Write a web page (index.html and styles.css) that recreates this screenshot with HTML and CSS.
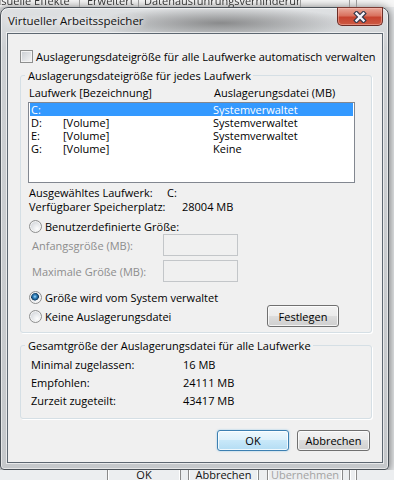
FILE: index.html
```html
<!DOCTYPE html>
<html lang="de">
    <head>
        <meta charset="UTF-8">
        <meta name="viewport" content="width=device-width, initial-scale=1.0">
        <title>Virtueller Arbeitsspeicher</title>
        <link rel="stylesheet" href="styles.css">
    </head>
    <body>
        <!-- Fenster "Leistungsoptionen" im Hintergrund, oben nur die Reiter -->
        <div class="hg-reiter">
            <span class="reiter reiter-1">Visuelle Effekte</span>
            <span class="reiter reiter-2">Erweitert</span>
            <span class="reiter reiter-3">Datenausführungsverhinderung</span>
            <span class="reiter reiter-4"></span>
            <span class="reiter reiter-5"></span>
        </div>

        <div class="fenster">
            <div class="titelleiste">
                <span class="titel">Virtueller Arbeitsspeicher</span>
                <button class="schliessen" title="Schließen">
                    <svg width="14" height="12" viewBox="0 0 14 12">
                        <path d="M3.5 2.5 L10.5 9.5 M10.5 2.5 L3.5 9.5" stroke="#34384a" stroke-width="4.6" stroke-linecap="square" fill="none"/>
                        <path d="M3.5 2.5 L10.5 9.5 M10.5 2.5 L3.5 9.5" stroke="#f4f3fb" stroke-width="2.4" stroke-linecap="square" fill="none"/>
                    </svg>
                </button>
            </div>

            <div class="inhalt">
                <div class="check-zeile">
                    <span class="checkbox"></span>
                    <span>Auslagerungsdateigröße für alle Laufwerke automatisch verwalten</span>
                </div>

                <!-- Einstellungen pro Laufwerk -->
                <fieldset class="gruppe gruppe-laufwerke">
                    <legend>Auslagerungsdateigröße für jedes Laufwerk</legend>
                    <div class="liste-kopf">
                        <span>Laufwerk [Bezeichnung]</span>
                        <span>Auslagerungsdatei (MB)</span>
                    </div>
                    <div class="liste">
                        <div class="zeile aktiv"><span>C:</span><span></span><span>Systemverwaltet</span></div>
                        <div class="zeile"><span>D:</span><span>[Volume]</span><span>Systemverwaltet</span></div>
                        <div class="zeile"><span>E:</span><span>[Volume]</span><span>Systemverwaltet</span></div>
                        <div class="zeile"><span>G:</span><span>[Volume]</span><span>Keine</span></div>
                    </div>

                    <div class="info info-laufwerk">
                        <span class="info-label">Ausgewähltes Laufwerk:</span>
                        <span>C:</span>
                    </div>
                    <div class="info info-platz">
                        <span class="info-label">Verfügbarer Speicherplatz:</span>
                        <span>28004 MB</span>
                    </div>

                    <div class="radio-zeile radio-eigene">
                        <span class="radio"></span>Benutzerdefinierte Größe:
                    </div>
                    <div class="feld-zeile feld-anfang">
                        <span class="feld-label">Anfangsgröße (MB):</span>
                        <span class="textfeld"></span>
                    </div>
                    <div class="feld-zeile feld-max">
                        <span class="feld-label">Maximale Größe (MB):</span>
                        <span class="textfeld"></span>
                    </div>
                    <div class="radio-zeile radio-system">
                        <span class="radio an"></span>Größe wird vom System verwaltet
                    </div>
                    <div class="radio-zeile radio-keine">
                        <span class="radio"></span>Keine Auslagerungsdatei
                        <button class="knopf festlegen">Festlegen</button>
                    </div>
                </fieldset>

                <!-- Summen über alle Laufwerke -->
                <fieldset class="gruppe gruppe-gesamt">
                    <legend>Gesamtgröße der Auslagerungsdatei für alle Laufwerke</legend>
                    <div class="wert-zeile"><span class="wert-label">Minimal zugelassen:</span><span>16 MB</span></div>
                    <div class="wert-zeile"><span class="wert-label">Empfohlen:</span><span>24111 MB</span></div>
                    <div class="wert-zeile"><span class="wert-label">Zurzeit zugeteilt:</span><span>43417 MB</span></div>
                </fieldset>

                <div class="knopf-leiste">
                    <button class="knopf standard">OK</button>
                    <button class="knopf abbrechen">Abbrechen</button>
                </div>
            </div>
        </div>

        <!-- Knöpfe des Hintergrundfensters, unten angeschnitten -->
        <div class="hg-knoepfe">
            <span class="hk hk-ok">OK</span>
            <span class="hk hk-abbrechen">Abbrechen</span>
            <span class="hk hk-uebernehmen">Übernehmen</span>
            <span class="hk hk-rand"></span>
        </div>
    </body>
</html>
```

FILE: styles.css
```css
/* Dialog "Virtueller Arbeitsspeicher" im Stil von Windows 7 */
body {
    margin: 0;
    width: 394px;
    height: 480px;
    overflow: hidden;
    background-color: #e8eaec;
    font-family: "Open Sans", "Noto Sans", sans-serif;
    font-size: 11px;
    color: #000;
}

/* Hintergrundfenster oben */
.hg-reiter {
    display: flex;
    height: 7px;
    overflow: hidden;
    background-color: #f7f7f7;
    color: #333;
}
.reiter {
    box-sizing: border-box;
    flex: none;
    margin-top: -6px;
    line-height: 14px;
    border-right: 1px solid #9a9a9a;
    white-space: nowrap;
    overflow: hidden;
    filter: blur(0.4px);
}
.reiter-1 { width: 80px; text-indent: -8px; }
.reiter-2 { width: 59px; padding-left: 7px; }
.reiter-3 { width: 162px; padding-left: 5px; }
.reiter-4 { width: 49px; }
.reiter-5 { width: 7px; }

/* Fensterrahmen (Aero) */
.fenster {
    box-sizing: border-box;
    width: 389px;
    height: 463px;
    padding: 0 5px 0 6px;
    border: 1px solid #4a5158;
    border-radius: 8px 8px 4px 4px;
    background:
        radial-gradient(ellipse 130px 16px at 220px 15px, rgba(85, 85, 85, 0.6), rgba(85, 85, 85, 0)),
        linear-gradient(#dfe1e3, #cdd0d3 40px, #c5c8cb);
    box-shadow: inset 0 0 0 1px rgba(255, 255, 255, 0.55), 0 1px 8px 1px rgba(0, 0, 0, 0.5);
}
.titelleiste {
    display: flex;
    align-items: flex-start;
    height: 25px;
}
.titel {
    flex: 1;
    padding-left: 1px;
    font-size: 11.5px;
    line-height: 25px;
    color: #111;
    text-shadow: 0 0 6px #fff, 0 0 10px #fff;
}
.schliessen {
    box-sizing: border-box;
    display: flex;
    align-items: center;
    justify-content: center;
    width: 46px;
    height: 19px;
    margin-top: -1px;
    padding: 0;
    border: 1px solid #6b2c25;
    border-top-color: #7a3a33;
    border-radius: 0 0 5px 5px;
    background: linear-gradient(#e9a899 0, #d9725f 45%, #c7432f 55%, #cc5a43 100%);
    box-shadow: inset 0 0 0 1px rgba(255, 200, 190, 0.45);
}

/* Client-Bereich */
.inhalt {
    box-sizing: border-box;
    height: 430px;
    border: 1px solid #5d6771;
    background-color: #f0f0f0;
    box-shadow: 0 0 0 1px rgba(255, 255, 255, 0.6);
}

.check-zeile {
    display: flex;
    align-items: center;
    height: 13px;
    line-height: 13px;
    margin: 16px 0 0 12px;
}
.checkbox {
    box-sizing: border-box;
    width: 13px;
    height: 13px;
    margin-right: 3px;
    border: 1px solid #8e8f8f;
    background: linear-gradient(135deg, #c9cdd2, #f6f6f6);
    box-shadow: inset 0 0 0 1px #f3f3f3;
}

/* Gruppenrahmen */
.gruppe {
    margin: 5px 10px 0 12px;
    padding: 0 7px 5px;
    min-width: 0;
    border: 1px solid #d5dfe5;
    border-radius: 3px;
    box-shadow: 1px 1px 0 #fff;
}
.gruppe legend {
    margin-left: -3px;
    padding: 0 2px 0 3px;
    line-height: 15px;
}
.gruppe-gesamt {
    padding-top: 3px;
    padding-bottom: 8px;
}

.liste-kopf {
    display: grid;
    grid-template-columns: 185px 1fr;
    margin-top: 2px;
    padding-left: 1px;
    line-height: 15px;
}
.liste {
    box-sizing: border-box;
    width: 327px;
    height: 81px;
    margin-top: 2px;
    padding: 0 1px;
    border: 1px solid #828790;
    background-color: #fff;
}
.zeile {
    display: grid;
    grid-template-columns: 32px 150px 1fr;
    height: 13px;
    padding-left: 1px;
    line-height: 13px;
}
.zeile.aktiv {
    background-color: #3399ff;
    color: #fff;
}

.info {
    display: flex;
    padding-left: 1px;
    line-height: 14px;
}
.info-laufwerk { margin-top: 3px; }
.info-laufwerk .info-label { width: 138px; }
.info-platz .info-label { width: 153px; }

.radio-zeile {
    display: flex;
    align-items: center;
    height: 13px;
    line-height: 13px;
}
.radio-eigene { margin-top: 6px; }
.radio-system { margin-top: 9px; }
.radio-keine {
    height: 22px;
    margin-top: 1px;
}
.radio {
    box-sizing: border-box;
    width: 13px;
    height: 13px;
    margin: 0 3px 0 1px;
    border: 1px solid #8e8f8f;
    border-radius: 50%;
    background: radial-gradient(circle at 65% 70%, #fdfdfd, #cfd3d8 85%);
    box-shadow: inset 0 0 0 1px #f4f4f4;
}
.radio.an {
    background:
        radial-gradient(circle at 45% 42%, #a8dcf8 0, #3a8cc8 1.5px, #1a5685 3px, #0f3556 3.6px, rgba(15, 53, 86, 0) 4.2px),
        radial-gradient(circle at 65% 70%, #fdfdfd, #cfd3d8 85%);
}

.feld-zeile {
    display: flex;
    align-items: center;
    height: 22px;
    padding-left: 4px;
    color: #8d8d8d;
}
.feld-anfang { margin-top: 1px; }
.feld-max { margin-top: 4px; }
.feld-label { width: 131px; }
.textfeld {
    box-sizing: border-box;
    width: 75px;
    height: 22px;
    border: 1px solid #c3c6c9;
    background-color: #f0f0f0;
}

/* Knöpfe */
.knopf {
    box-sizing: border-box;
    height: 21px;
    padding: 0;
    border: 1px solid #707070;
    border-radius: 3px;
    background: linear-gradient(#f2f2f2 0, #ebebeb 50%, #dddddd 50%, #cfcfcf 100%);
    box-shadow: inset 0 0 0 1px rgba(255, 255, 255, 0.75);
    font: inherit;
    color: #000;
}
.festlegen {
    width: 72px;
    height: 22px;
    margin: 0 25px 0 auto;
}
.knopf.standard {
    width: 72px;
    border-color: #3c7fb1;
    background: linear-gradient(#eef8fd 0, #dcf0fb 50%, #c8e8f9 50%, #b4ddf4 100%);
    box-shadow: inset 0 0 0 1px rgba(255, 255, 255, 0.8), 0 0 2px rgba(80, 170, 230, 0.6);
}
.knopf.abbrechen { width: 73px; }

.wert-zeile {
    display: flex;
    padding-left: 3px;
    line-height: 18px;
}
.wert-label { width: 152px; }

.knopf-leiste {
    display: flex;
    justify-content: flex-end;
    gap: 8px;
    margin-top: 11px;
    padding-right: 12px;
}

/* Hintergrundfenster unten */
.hg-knoepfe {
    display: flex;
    height: 10px;
    overflow: hidden;
    background-color: #eceef0;
}
.hk {
    box-sizing: border-box;
    flex: none;
    line-height: 10px;
    text-align: center;
    border-left: 1px solid #8a8a8a;
    border-right: 1px solid #8a8a8a;
    box-shadow: inset 1px 0 0 #fff, inset -1px 0 0 #fff;
    color: #111;
}
.hk-ok { width: 74px; margin-left: 107px; }
.hk-abbrechen { width: 71px; margin-left: 7px; }
.hk-uebernehmen { width: 76px; margin-left: 8px; color: #a3a3a3; }
.hk-rand { width: 8px; margin-left: 6px; }
```
